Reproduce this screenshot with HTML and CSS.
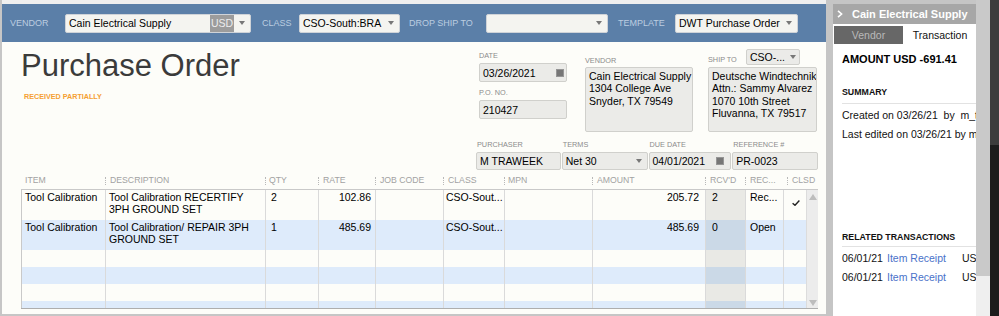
FILE: index.html
```html
<!DOCTYPE html>
<html>
<head>
<meta charset="utf-8">
<title>Purchase Order</title>
<link rel="stylesheet" href="styles.css">
</head>
<body>
<div class="app">
  <div class="main">
    <div class="topbar">
      <span class="tb-label w-vendor">VENDOR</span>
      <div class="tb-field f-vendor"><span class="val">Cain Electrical Supply</span><span class="cur">USD</span><span class="arrow"></span></div>
      <span class="tb-label w-class">CLASS</span>
      <div class="tb-field f-class"><span class="val">CSO-South:BRA</span><span class="arrow"></span></div>
      <span class="tb-label w-drop">DROP SHIP TO</span>
      <div class="tb-field f-drop"><span class="val"></span><span class="arrow"></span></div>
      <span class="tb-label w-tpl">TEMPLATE</span>
      <div class="tb-field f-tpl"><span class="val">DWT Purchase Order</span><span class="arrow"></span></div>
    </div>
    <div class="content">
      <div class="head">
        <div class="title-block">
          <h1 class="title">Purchase Order</h1>
          <div class="status">RECEIVED PARTIALLY</div>
        </div>
        <div class="fields">
          <div class="fields-top">
            <div class="col col-date">
              <div class="flabel">DATE</div>
              <div class="input">03/26/2021<span class="cal"></span></div>
              <div class="flabel lbl-po">P.O. NO.</div>
              <div class="input">210427</div>
            </div>
            <div class="col col-vendor">
              <div class="flabel">VENDOR</div>
              <div class="addr">Cain Electrical Supply<br>1304 College Ave<br>Snyder, TX 79549</div>
            </div>
            <div class="col col-ship">
              <div class="ship-head"><span class="flabel">SHIP TO</span><div class="input small-select">CSO-...<span class="arrow"></span></div></div>
              <div class="addr">Deutsche Windtechnik<br>Attn.: Sammy Alvarez<br>1070 10th Street<br>Fluvanna, TX 79517</div>
            </div>
          </div>
          <div class="fields-bottom">
            <div class="fb fb-purch"><div class="flabel">PURCHASER</div><div class="input">M TRAWEEK</div></div>
            <div class="fb fb-terms"><div class="flabel">TERMS</div><div class="input">Net 30<span class="arrow"></span></div></div>
            <div class="fb fb-due"><div class="flabel">DUE DATE</div><div class="input">04/01/2021<span class="cal cal-due"></span></div></div>
            <div class="fb fb-ref"><div class="flabel">REFERENCE #</div><div class="input">PR-0023</div></div>
          </div>
        </div>
      </div>
      <div class="grid">
        <div class="ghead">
          <div class="gh">ITEM</div>
          <div class="gh">DESCRIPTION</div>
          <div class="gh gh-qty">QTY</div>
          <div class="gh">RATE</div>
          <div class="gh">JOB CODE</div>
          <div class="gh">CLASS</div>
          <div class="gh gh-qty">MPN</div>
          <div class="gh">AMOUNT</div>
          <div class="gh">RCV'D</div>
          <div class="gh">REC...</div>
          <div class="gh gh-clsd">CLSD</div>
        </div>
        <div class="gbody">
          <div class="rows">
            <div class="row tall">
              <div class="c">Tool Calibration</div>
              <div class="c">Tool Calibration RECERTIFY 3PH GROUND SET</div>
              <div class="c c-qty">2</div>
              <div class="c num">102.86</div>
              <div class="c"></div>
              <div class="c c-class">CSO-Sout...</div>
              <div class="c"></div>
              <div class="c num num-amt">205.72</div>
              <div class="c rcv">2</div>
              <div class="c c-rec">Rec...</div>
              <div class="c last"><svg class="check" width="8" height="6" viewBox="0 0 8 6"><path d="M0.6 3.2 L3 5.3 L7.4 0.6" stroke="#222" stroke-width="1.4" fill="none"/></svg></div>
            </div>
            <div class="row tall">
              <div class="c">Tool Calibration</div>
              <div class="c">Tool Calibration/ REPAIR 3PH GROUND SET</div>
              <div class="c c-qty">1</div>
              <div class="c num">485.69</div>
              <div class="c"></div>
              <div class="c c-class">CSO-Sout...</div>
              <div class="c"></div>
              <div class="c num num-amt">485.69</div>
              <div class="c rcv">0</div>
              <div class="c c-rec">Open</div>
              <div class="c last"></div>
            </div>
            <div class="row short"><div class="c"></div><div class="c"></div><div class="c"></div><div class="c"></div><div class="c"></div><div class="c"></div><div class="c"></div><div class="c"></div><div class="c rcv"></div><div class="c"></div><div class="c last"></div></div>
            <div class="row short"><div class="c"></div><div class="c"></div><div class="c"></div><div class="c"></div><div class="c"></div><div class="c"></div><div class="c"></div><div class="c"></div><div class="c rcv"></div><div class="c"></div><div class="c last"></div></div>
            <div class="row short"><div class="c"></div><div class="c"></div><div class="c"></div><div class="c"></div><div class="c"></div><div class="c"></div><div class="c"></div><div class="c"></div><div class="c rcv"></div><div class="c"></div><div class="c last"></div></div>
            <div class="row short"><div class="c"></div><div class="c"></div><div class="c"></div><div class="c"></div><div class="c"></div><div class="c"></div><div class="c"></div><div class="c"></div><div class="c rcv"></div><div class="c"></div><div class="c last"></div></div>
          </div>
          <div class="vscroll"><span class="up"></span><span class="down"></span></div>
        </div>
      </div>
    </div>
  </div>
  <div class="side">
    <div class="phead"><svg class="chev" width="6" height="8" viewBox="0 0 6 8"><path d="M1 0.8 L4.6 4 L1 7.2" stroke="#fff" stroke-width="1.6" fill="none"/></svg>Cain Electrical Supply</div>
    <div class="pbody">
      <div class="tabs"><div class="tab tab-v">Vendor</div><div class="tab tab-t">Transaction</div></div>
      <div class="pcontent">
        <div class="amount">AMOUNT USD -691.41</div>
        <div class="sec-title sec-summary">SUMMARY</div>
        <div class="pline">Created on 03/26/21  by  m_traweek</div>
        <div class="pline">Last edited on 03/26/21 by m_traweek</div>
        <div class="sec-title sec-related">RELATED TRANSACTIONS</div>
        <div class="pline"><span class="rdate">06/01/21</span><span class="rlink">Item Receipt</span>USD 205.72</div>
        <div class="pline"><span class="rdate">06/01/21</span><span class="rlink">Item Receipt</span>USD 0.00</div>
      </div>
    </div>
  </div>
  <div class="pscroll"><div class="thumb"></div></div>
  <div class="edge"></div>
</div>
</body>
</html>
```

FILE: styles.css
```css
* { box-sizing: border-box; margin: 0; padding: 0; }
html, body { width: 999px; height: 316px; overflow: hidden; }
body { font-family: "Liberation Sans", Arial, sans-serif; font-size: 10.5px; color: #111; background: #fff; }

.app { display: flex; height: 316px; }

/* main */
.main { width: 826px; flex: none; border-left: 2px solid #c6c6c6; background: #efefef; padding-top: 4px; display: flex; flex-direction: column; }

.topbar { height: 38px; flex: none; background: #5b7fa8; display: flex; align-items: center; padding-left: 8px; }
.tb-label { font-size: 9px; color: #bccde0; flex: none; white-space: nowrap; }
.w-vendor { width: 55px; }
.w-class { width: 37px; margin-left: 11px; }
.w-drop { width: 77px; margin-left: 9px; }
.w-tpl { width: 57px; margin-left: 10px; }
.tb-field { height: 19px; flex: none; background: #f4f4f0; border: 1px solid #cfd3d8; border-radius: 2px; display: flex; align-items: center; color: #000; }
.tb-field .val { flex: 1; padding-left: 3px; white-space: nowrap; overflow: hidden; }
.f-vendor { width: 186px; }
.f-class { width: 101px; }
.f-drop { width: 122px; }
.f-tpl { width: 123px; }
.cur { width: 24px; height: 17px; background: #9c9c9c; color: #ededed; display: flex; align-items: center; justify-content: center; }
.arrow { width: 16px; height: 100%; flex: none; display: flex; align-items: center; justify-content: center; }
.arrow::before { content: ""; border-left: 3px solid transparent; border-right: 3px solid transparent; border-top: 4px solid #777; }

.content { flex: 1; background: #fdfdf9; border-bottom: 2px solid #c6c6c6; display: flex; flex-direction: column; }

.head { display: flex; height: 130px; flex: none; }
.title-block { width: 474px; padding-left: 19px; padding-top: 8px; }
.title { font-size: 31px; line-height: 31px; font-weight: normal; color: #3b3b3b; }
.status { margin-top: 12px; padding-left: 3px; font-size: 7.2px; line-height: 8px; font-weight: bold; color: #f5a033; }

.fields { width: 342px; }
.fields-top { display: flex; height: 90px; }
.col { display: flex; flex-direction: column; flex: none; }
.col-date { margin-left: 3px; width: 88px; padding-top: 10px; }
.col-vendor { margin-left: 18px; width: 108px; padding-top: 15px; }
.col-ship { margin-left: 15px; width: 109px; padding-top: 7px; }
.flabel { font-size: 7.3px; line-height: 8px; height: 8px; color: #8c8c8c; white-space: nowrap; }
.col-date .flabel { margin-bottom: 3px; }
.col-date .lbl-po { margin-top: 7px; }
.col-vendor .flabel { margin-bottom: 2px; }
.input { height: 19px; background: #ebebe8; border: 1px solid #d0d0cc; border-radius: 2px; display: flex; align-items: center; padding-left: 3px; color: #000; white-space: nowrap; }
.cal { margin-left: auto; margin-right: 2px; width: 8px; height: 8px; background: #767676; border: 1px solid #959595; }
.cal-due { margin-right: 6px; }
.addr { height: 65px; background: #ebebe8; border: 1px solid #d0d0cc; border-radius: 2px; padding: 2px 3px; line-height: 12.3px; color: #000; white-space: nowrap; overflow: hidden; }
.ship-head { display: flex; align-items: flex-end; height: 16px; margin-bottom: 2px; }
.ship-head .flabel { width: 38px; margin-bottom: 1px; }
.small-select { width: 54px; height: 16px; padding-left: 3px; }
.small-select .arrow, .fb-terms .arrow { margin-left: auto; }

.fields-bottom { display: flex; gap: 1px; margin-top: 9px; }
.fb { display: flex; flex-direction: column; }
.fb .flabel { padding-left: 1px; margin-bottom: 3px; }
.fb .input { height: 18px; }
.fb-purch { width: 85px; }
.fb-terms { width: 86px; }
.fb-due { width: 83px; }
.fb-ref { width: 86px; }

/* grid */
.grid { margin-left: 19px; width: 797px; flex: none; }
.ghead { display: grid; grid-template-columns: 85px 160px 53px 57px 68px 61px 88px 113px 40px 38px 22px; height: 17px; width: 785px; }
.gh { position: relative; padding-left: 4px; font-size: 8.7px; line-height: 17px; color: #a2a2a2; white-space: nowrap; }
.gh + .gh::before { content: ""; position: absolute; left: -1px; top: 5px; height: 8px; border-left: 1px dotted #b8b8b8; }
.gh-qty { padding-left: 3px; }
.gh-clsd { padding-left: 8px; }
.gh-clsd::before { left: 3px !important; }

.gbody { display: flex; height: 120px; border-top: 1px solid #c9c9c9; border-bottom: 1px solid #aeaeae; }
.rows { width: 785px; border-left: 1px solid #c9c9c9; overflow: hidden; }
.row { display: grid; grid-template-columns: 84px 160px 53px 57px 68px 61px 88px 113px 40px 38px 22px; }
.row.tall { height: 30px; }
.row.short { height: 17px; }
.row:nth-child(even) { background: #deebfb; }
.c { border-right: 1px solid #dadada; padding: 1px 3px 0; line-height: 12px; overflow: hidden; color: #000; }
.c.last { border-right: none; }
.c-qty { padding-left: 5px; }
.c-class { padding-left: 2px; white-space: nowrap; }
.num { text-align: right; padding-right: 4px; }
.num-amt { padding-right: 6px; }
.rcv { background: #e9e9e5; padding-left: 6px; }
.row:nth-child(even) .rcv { background: #cbd9e7; }
.c-rec { padding-left: 4px; white-space: nowrap; }
.check { display: block; margin: 9px 0 0 5px; }

.vscroll { width: 12px; background: #ececec; border-left: 1px solid #dcdcdc; display: flex; flex-direction: column; justify-content: space-between; align-items: center; padding: 4px 0 2px; }
.up { border-left: 4px solid transparent; border-right: 4px solid transparent; border-bottom: 6px solid #bdbdbd; }
.down { border-left: 4px solid transparent; border-right: 4px solid transparent; border-top: 6px solid #bdbdbd; }

/* side panel */
.side { width: 150px; flex: none; background: #c5c5c5; padding: 4px 0 0 7px; display: flex; flex-direction: column; }
.phead { height: 20px; flex: none; background: #a7a7a7; color: #fff; font-weight: bold; font-size: 11px; display: flex; align-items: center; padding-left: 4px; white-space: nowrap; overflow: hidden; }
.chev { margin-right: 9px; flex: none; }
.pbody { flex: 1; background: #fff; overflow: hidden; }
.tabs { display: flex; margin-top: 2px; height: 18px; }
.tab { height: 18px; display: flex; align-items: center; justify-content: center; }
.tab-v { margin-left: 1px; width: 69px; background: #676767; color: #b9b9b9; }
.tab-t { margin-left: 2px; width: 70px; color: #111; }
.pcontent { padding-left: 9px; }
.amount { margin-top: 8.5px; font-size: 11px; line-height: 13px; font-weight: bold; color: #000; white-space: nowrap; }
.sec-title { font-size: 8.8px; line-height: 10px; font-weight: bold; color: #111; white-space: nowrap; border-bottom: 1px solid #e2e2e2; margin-bottom: 5px; }
.sec-summary { margin-top: 21.5px; padding-bottom: 5.5px; }
.sec-related { margin-top: 85px; padding-bottom: 4.5px; }
.pline { height: 19px; line-height: 12px; white-space: pre; color: #111; }
.rdate { display: inline-block; width: 45px; }
.rlink { display: inline-block; width: 75px; color: #4a72c9; }

.pscroll { width: 14px; flex: none; background: #efefef; }
.thumb { height: 276px; background: #c9c9c9; }
.edge { width: 9px; flex: none; background: linear-gradient(#3c3c3c 0, #3c3c3c 145px, #1c1c1c 145px); }
```
